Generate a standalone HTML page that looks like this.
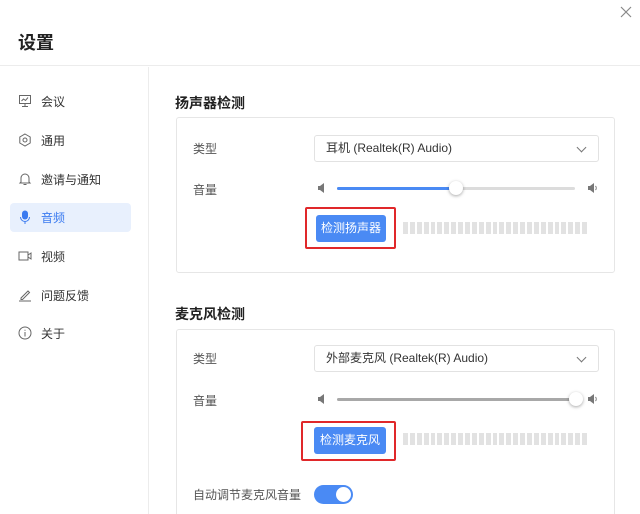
<!DOCTYPE html>
<html><head><meta charset="utf-8"><style>
*{margin:0;padding:0;box-sizing:border-box}
html,body{width:640px;height:514px;overflow:hidden}
body{background:#fff;font-family:"Liberation Sans","Noto Sans CJK SC",sans-serif;color:#333;position:relative;font-size:12px}
.a{position:absolute}
.hdr{left:0;top:0;width:640px;height:66px;border-bottom:1px solid #ececec}
.side{left:0;top:67px;width:149px;height:447px;border-right:1px solid #ececec}
.nav{left:18px;font-size:12px;color:#333;display:flex;align-items:center;height:20px}
.nav svg{margin-right:9px}
.card{left:176px;width:439px;border:1px solid #e6e6e6;border-radius:3px}
.lbl{left:193px;font-size:12px;color:#555}
.sel{left:314px;width:285px;height:27px;border:1px solid #e2e2e2;border-radius:3px;font-size:12px;color:#333;padding-left:11px;line-height:25px}
.sel:after{content:"";position:absolute;right:13px;top:8px;width:6px;height:6px;border-right:1px solid #777;border-bottom:1px solid #777;transform:rotate(45deg)}
.btn{background:#4a8af4;color:#fff;border-radius:3px;font-size:12px;text-align:center;line-height:27px;width:70px;height:27px}
.red{border:2px solid #e0282a;border-radius:2px}
.bars{display:flex;gap:2px}
.bars i{display:block;width:4.9px;height:12px;background:#e2e2e2}
.track{height:3px;background:#dcdcdc;border-radius:2px}
.thumb{width:14px;height:14px;border-radius:50%;background:#fff;box-shadow:0 1px 3px rgba(0,0,0,.35)}
</style></head><body>
<div class="a hdr"></div>
<div class="a" style="left:18px;top:29px;font-size:18px;font-weight:bold;color:#222">设置</div>
<div class="a" style="left:620px;top:6px;width:12px;height:12px">
<svg width="12" height="12"><path d="M1 1L11 11M11 1L1 11" stroke="#888" stroke-width="1.2"/></svg></div>
<div class="a side"></div>
<div class="a" style="left:10px;top:203px;width:121px;height:29px;background:#e8f0fd;border-radius:4px"></div>
<div class="a nav" style="top:91px"><svg width="14" height="14"><rect x="1.5" y="1.5" width="11" height="8" fill="none" stroke="#666"/><path d="M7 9.5v3M4 12.5h6M3.5 7l2-2 2 1.5 2.5-3" stroke="#666" fill="none"/></svg>会议</div>
<div class="a nav" style="top:130px"><svg width="14" height="14"><path d="M7 1l5.2 3v6L7 13 1.8 10V4z" fill="none" stroke="#666"/><circle cx="7" cy="7" r="2" fill="none" stroke="#666"/></svg>通用</div>
<div class="a nav" style="top:169px"><svg width="14" height="14"><path d="M3 10V6a4 4 0 018 0v4l1 1H2z M5.5 12.5h3" fill="none" stroke="#666"/></svg>邀请与通知</div>
<div class="a nav" style="top:207px;color:#3a7af0"><svg width="14" height="14"><rect x="4" y="0.5" width="6" height="9" rx="3" fill="#3a7af0"/><path d="M2.5 7a4.5 4.5 0 009 0M7 11.5V14" stroke="#3a7af0" fill="none"/></svg>音频</div>
<div class="a nav" style="top:246px"><svg width="14" height="14"><rect x="1" y="3" width="9" height="8" fill="none" stroke="#666"/><path d="M10 6l3-2v6l-3-2" fill="none" stroke="#666"/></svg>视频</div>
<div class="a nav" style="top:285px"><svg width="14" height="14"><path d="M3 10l7-7 1.5 1.5-7 7H3zM1 13h12" fill="none" stroke="#666"/></svg>问题反馈</div>
<div class="a nav" style="top:323px"><svg width="14" height="14"><circle cx="7" cy="7" r="6" fill="none" stroke="#666"/><path d="M7 6v4.5M7 3.8v1" stroke="#666"/></svg>关于</div>

<div class="a" style="left:175px;top:93px;font-size:14px;font-weight:bold;color:#222">扬声器检测</div>
<div class="a card" style="top:117px;height:156px"></div>
<div class="a lbl" style="top:140px">类型</div>
<div class="a sel" style="top:135px">耳机 (Realtek(R) Audio)</div>
<div class="a lbl" style="top:181px">音量</div>
<svg class="a" style="left:317px;top:183px" width="8" height="10"><path d="M1 3h2l4-3v10L3 7H1z" fill="#777"/></svg>
<div class="a track" style="left:337px;top:187px;width:238px"></div>
<div class="a track" style="left:337px;top:187px;width:119px;background:#4a8af4"></div>
<div class="a thumb" style="left:449px;top:181px"></div>
<svg class="a" style="left:587px;top:183px" width="11" height="10"><path d="M1 3h2l4-3v10L3 7H1z" fill="#777"/><path d="M8.5 3a3 3 0 010 4" stroke="#777" fill="none"/></svg>
<div class="a red" style="left:305px;top:207px;width:91px;height:42px"></div>
<div class="a btn" style="left:316px;top:215px">检测扬声器</div>
<div class="a bars" style="left:403px;top:222px"><i></i><i></i><i></i><i></i><i></i><i></i><i></i><i></i><i></i><i></i><i></i><i></i><i></i><i></i><i></i><i></i><i></i><i></i><i></i><i></i><i></i><i></i><i></i><i></i><i></i><i></i><i></i></div>

<div class="a" style="left:175px;top:304px;font-size:14px;font-weight:bold;color:#222">麦克风检测</div>
<div class="a card" style="top:329px;height:200px"></div>
<div class="a lbl" style="top:350px">类型</div>
<div class="a sel" style="top:345px">外部麦克风 (Realtek(R) Audio)</div>
<div class="a lbl" style="top:392px">音量</div>
<svg class="a" style="left:317px;top:394px" width="8" height="10"><path d="M1 3h2l4-3v10L3 7H1z" fill="#777"/></svg>
<div class="a track" style="left:337px;top:398px;width:240px;background:#a8a8a8"></div>
<div class="a thumb" style="left:569px;top:392px"></div>
<svg class="a" style="left:587px;top:394px" width="11" height="10"><path d="M1 3h2l4-3v10L3 7H1z" fill="#777"/><path d="M8.5 3a3 3 0 010 4" stroke="#777" fill="none"/></svg>
<div class="a red" style="left:301px;top:421px;width:95px;height:40px"></div>
<div class="a btn" style="left:314px;top:427px;width:72px">检测麦克风</div>
<div class="a bars" style="left:403px;top:433px"><i></i><i></i><i></i><i></i><i></i><i></i><i></i><i></i><i></i><i></i><i></i><i></i><i></i><i></i><i></i><i></i><i></i><i></i><i></i><i></i><i></i><i></i><i></i><i></i><i></i><i></i><i></i></div>
<div class="a lbl" style="top:486px">自动调节麦克风音量</div>
<div class="a" style="left:314px;top:485px;width:39px;height:19px;border-radius:10px;background:#4a8af4"><div style="position:absolute;right:2px;top:2px;width:15px;height:15px;border-radius:50%;background:#fff"></div></div>
</body></html>
